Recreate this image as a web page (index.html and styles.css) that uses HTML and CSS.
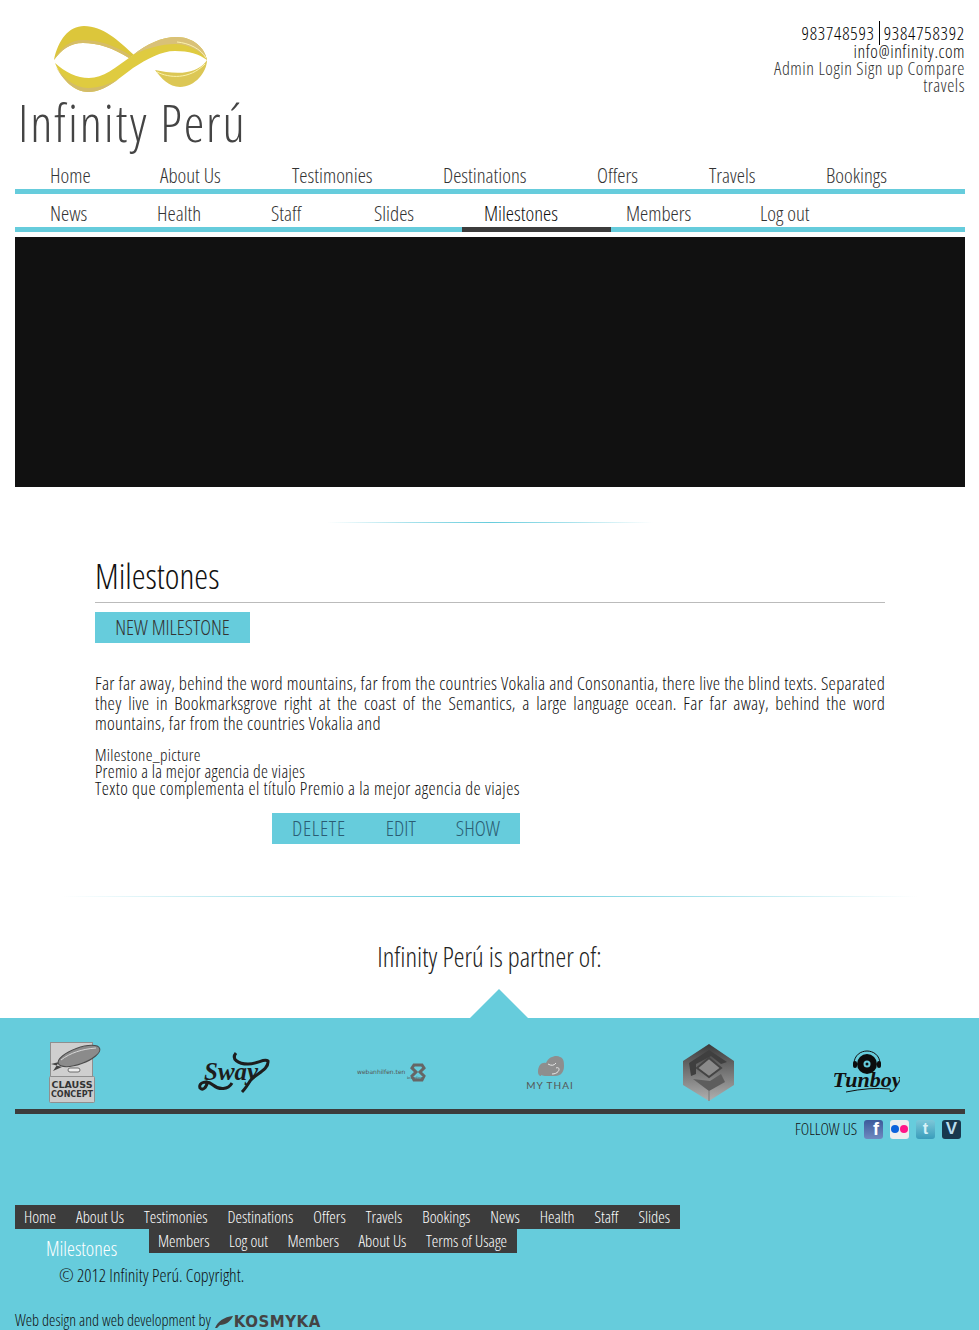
FILE: index.html
```html
<!DOCTYPE html>
<html>
<head>
<meta charset="utf-8">
<title>Infinity Perú</title>
<link rel="stylesheet" href="styles.css">
</head>
<body>
<div id="header">
  <div class="logo">
    <svg class="logo-mark" width="156" height="68" viewBox="0 0 156 68">
      <path d="M1 34C5 14 16 0 31 0C50 0 65 14 81 29L76 32C60 22 45 17 30 17C17 17 8 24 1 34Z" fill="#dcc63b"/>
      <path d="M1 34C8 24 17 17 30 17C45 17 60 22 76 32L78 30C60 18 44 14 30 14C17 14 7 22 1 34Z" fill="#d6bd68"/>
      <path d="M2 37C12 46 24 52 36 52C50 52 62 42 80 29C94 18 108 11 124 11C140 11 152 22 154 34C146 28 136 25 122 25C108 25 94 33 80 42C66 52 52 66 35 66C20 66 8 52 2 37Z" fill="#dfcb40"/>
      <path d="M80 29C94 18 108 11 124 11C140 11 152 22 154 34C146 23 134 18 122 18C108 18 94 22 80 29Z" fill="#d9c178"/>
      <path d="M3 41C10 54 22 66 35 66C46 66 56 60 66 53C56 58 46 62 35 62C22 62 10 52 3 41Z" fill="#d3bc6a"/>
      <path d="M102 44C112 46 124 48 134 46C144 44 150 40 154 34C154 46 142 61 127 61C116 61 108 52 102 44Z" fill="#dcc755"/>
      <path d="M104 46C116 52 136 54 152 38" fill="none" stroke="#fbf2ac" stroke-width="1"/>
      <path d="M124 16C136 17 148 23 153 32" fill="none" stroke="#fbf2ac" stroke-width="1"/>
    </svg>
    <div class="logo-text">Infinity Perú</div>
  </div>
  <div class="contact">
    <div class="phones"><span class="phone-a">983748593</span><span>9384758392</span></div>
    <div class="mail">info@infinity.com</div>
    <div class="contact-links">Admin Login Sign up Compare travels</div>
  </div>
</div>

<ul class="mainnav first">
  <li class="w1">Home</li>
  <li class="w2">About Us</li>
  <li class="w3">Testimonies</li>
  <li class="w4">Destinations</li>
  <li class="w5">Offers</li>
  <li class="w6">Travels</li>
  <li>Bookings</li>
</ul>
<ul class="mainnav second">
  <li class="s1">News</li>
  <li class="s2">Health</li>
  <li class="s3">Staff</li>
  <li class="s4">Slides</li>
  <li class="s5 current">Milestones</li>
  <li class="s6">Members</li>
  <li>Log out</li>
</ul>

<div id="slider"></div>

<div class="fade-line short"></div>

<div id="content">
  <h1>Milestones</h1>
  <a class="btn new-btn">NEW MILESTONE</a>
  <p class="intro">Far far away, behind the word mountains, far from the countries Vokalia and Consonantia, there live the blind texts. Separated they live in Bookmarksgrove right at the coast of the Semantics, a large language ocean. Far far away, behind the word mountains, far from the countries Vokalia and</p>
  <div class="record">
    <div class="rec-name">Milestone_picture</div>
    <div class="rec-title">Premio a la mejor agencia de viajes</div>
    <div class="rec-text">Texto que complementa el título Premio a la mejor agencia de viajes</div>
  </div>
  <div class="actions">
    <a class="btn">DELETE</a><a class="btn">EDIT</a><a class="btn">SHOW</a>
  </div>
</div>

<div class="fade-line wide"></div>

<h2 class="partner-title">Infinity Perú is partner of:</h2>
<div class="arrow"></div>

<div id="footer">
  <div class="partners">
    <svg width="54" height="63" viewBox="0 0 54 63">
      <rect x="2.5" y="1.5" width="42" height="36" fill="#cfcfcf" stroke="#8f8f8f"/>
      <path d="M3 23L11 21L5 30L14 26Z" fill="#444"/>
      <ellipse cx="31" cy="15" rx="22" ry="8" transform="rotate(-20 31 15)" fill="#8b8b8b" stroke="#4c4c4c"/>
      <path d="M13 19C22 12 34 8 48 7" fill="none" stroke="#d8d8d8"/>
      <rect x="20" y="27" width="12" height="4" rx="2" fill="#eee" stroke="#6c6c6c"/>
      <rect x="1.5" y="35.5" width="45" height="26" rx="1" fill="#cbcbcb" stroke="#8f8f8f"/>
      <text x="24" y="47" class="clauss">CLAUSS</text>
      <text x="24" y="56" class="clauss small">CONCEPT</text>
    </svg>
    <svg width="72" height="43" viewBox="0 0 72 43">
      <text x="6" y="29" class="sway">Sway</text>
      <path d="M38 2C33 8 40 13 50 13C60 13 66 7 70 10C71 19 57 23 52 30C49 35 47 38 44 41" fill="none" stroke="#1d1d1d" stroke-width="3"/>
      <path d="M10 30C8 37 5 40 2 37C0 31 9 29 15 34C21 39 30 39 34 32" fill="none" stroke="#1d1d1d" stroke-width="3"/>
    </svg>
    <svg width="70" height="20" viewBox="0 0 70 20">
      <text x="0" y="11" class="web-t">webanhilfen.ten</text>
      <text x="50" y="16" class="web-t tiny">branding</text>
      <path d="M57 2L65 2L67 5L63 9L67 13L65 17L57 17L55 13L59 9L55 5Z" fill="none" stroke="#666" stroke-width="3"/>
    </svg>
    <svg width="50" height="36" viewBox="0 0 50 36">
      <path d="M13 17C13 10 17 7 21 8C24 1 32 0 35 2C39 3 39 8 39 11C39 17 36 21 30 21H20C17 21 16 19 16 21C14 21 13 19 13 17Z" fill="#8e8e8e"/>
      <path d="M23 9Q28 12 31 8M27 19C35 19 36 11 31 13" fill="none" stroke="#e8e8e8" stroke-width="1"/>
      <text x="25" y="34" class="mythai">MY THAI</text>
    </svg>
    <svg width="52" height="57" viewBox="0 0 52 57">
      <defs>
        <linearGradient id="cube" x1="0" y1="0" x2="0" y2="1">
          <stop offset="0" stop-color="#3a3a3a"/>
          <stop offset="1" stop-color="#b0b0b0"/>
        </linearGradient>
      </defs>
      <path d="M26 0L51 17V41L26 57L0 41V17Z" fill="url(#cube)"/>
      <path d="M26 6L44 18L38 20L28 12L13 20L13 30L8 32L6 19Z" fill="#3f3f3f"/>
      <path d="M26 14L38 24L26 33L14 24Z" fill="#8a8a8a" stroke="#444" stroke-width="2"/>
      <path d="M10 35L27 37L38 30L42 38L26 47Z" fill="#5d5d5d"/>
      <path d="M26 47V57" stroke="#777"/>
    </svg>
    <svg width="66" height="46" viewBox="0 0 66 46">
      <path d="M20 14C20 5 27 1 33 1S46 5 46 14" fill="none" stroke="#111"/>
      <circle cx="33" cy="14" r="10" fill="#0c0c0c"/>
      <circle cx="33" cy="14" r="3.5" fill="#66ccdc"/>
      <circle cx="33" cy="14" r="1.5" fill="#0c0c0c"/>
      <rect x="19" y="11" width="4" height="7" rx="2" fill="#0c0c0c"/>
      <rect x="43" y="11" width="4" height="7" rx="2" fill="#0c0c0c"/>
      <text x="33" y="37" class="tunboy">Tunboy</text>
      <path d="M12 42Q36 37 56 39" fill="none" stroke="#111"/>
    </svg>
  </div>
  <div class="dark-bar"></div>
  <div class="follow">
    <span class="follow-label">FOLLOW US</span>
    <span class="social fb">f</span>
    <span class="social flickr"><i class="dot blue"></i><i class="dot pink"></i></span>
    <span class="social tw">t</span>
    <span class="social vimeo">V</span>
  </div>
  <div class="foot-links">
    <ul class="footnav row-a">
      <li>Home</li><li>About Us</li><li>Testimonies</li><li>Destinations</li><li>Offers</li><li>Travels</li><li>Bookings</li><li>News</li><li>Health</li><li>Staff</li><li>Slides</li>
    </ul>
    <div class="row-b">
      <span class="foot-current">Milestones</span>
      <ul class="footnav">
        <li>Members</li><li>Log out</li><li>Members</li><li>About Us</li><li>Terms of Usage</li>
      </ul>
    </div>
  </div>
  <div class="copyright">© 2012 Infinity Perú. Copyright.</div>
  <div class="credit">
    <span>Web design and web development by</span>
    <svg class="feather" width="18" height="12" viewBox="0 0 18 12"><path d="M0 12C3 5 9 1 18 0C16 5 11 9 5 9L2 12Z" fill="#444"/></svg>
    <span class="kosmyka">KOSMYKA</span>
  </div>
</div>
</body>
</html>
```

FILE: styles.css
```css
html, body
{
margin: 0;
padding: 0;
}

body
{
background: #fff;
color: #222;
font-family: "Open Sans", sans-serif;
font-stretch: 75%;
font-weight: 350;
font-size: 18px;
width: 979px;
overflow-x: hidden;
}

#header
{
display: flex;
justify-content: space-between;
height: 160px;
margin: 0 14px 0 15px;
}

.logo
{
padding-top: 26px;
}

.logo-mark
{
display: block;
margin-left: 38px;
}

.logo-text
{
font-size: 52px;
font-weight: 300;
letter-spacing: 1.9px;
line-height: 56px;
color: #444;
margin-left: 3px;
white-space: nowrap;
}

.contact
{
width: 200px;
padding-top: 23px;
text-align: right;
font-size: 18px;
letter-spacing: 0.55px;
line-height: 17px;
}

.phones
{
letter-spacing: 0.8px;
line-height: 21px;
color: #000;
}

.phone-a
{
border-right: 1px solid #000;
padding-right: 4px;
margin-right: 4px;
}

.mail
{
margin-top: -1px;
color: #111;
}

.contact-links
{
color: #333;
}

.mainnav
{
list-style: none;
display: flex;
margin: 0 14px 0 15px;
padding: 2px 0 1px 35px;
border-bottom: 5px solid #66ccdc;
font-size: 20.8px;
line-height: 26px;
color: #333;
}

.mainnav.second
{
padding-top: 6px;
}

.w1 { width: 110px; }
.w2 { width: 132px; }
.w3 { width: 151px; }
.w4 { width: 154px; }
.w5 { width: 112px; }
.w6 { width: 117px; }

.s1 { width: 107px; }
.s2 { width: 114px; }
.s3 { width: 103px; }
.s4 { width: 110px; }
.s5 { width: 142px; }
.s6 { width: 134px; }

.mainnav .current
{
color: #111;
position: relative;
}

.mainnav .current:after
{
content: "";
position: absolute;
left: -22px;
bottom: -6px;
width: 149px;
height: 5px;
background: #3c3c3c;
}

#slider
{
background: #111;
height: 250px;
margin: 5px 14px 0 15px;
}

.fade-line
{
height: 1px;
margin-left: auto;
margin-right: auto;
background: linear-gradient(to right, #fff, #a8e2ec 25%, #66ccdc 50%, #a8e2ec 75%, #fff);
}

.fade-line.short
{
width: 326px;
margin-top: 35px;
}

.fade-line.wide
{
width: 856px;
margin-top: 52px;
}

#content
{
margin: 0 94px 0 95px;
}

h1
{
font-weight: 300;
font-size: 35px;
line-height: 40px;
color: #111;
margin: 33px 0 0;
padding-bottom: 6px;
border-bottom: 1px solid #bbb;
}

.btn
{
color: #2b5d73;
font-size: 21px;
line-height: 31px;
white-space: nowrap;
}

.new-btn
{
display: block;
background: #66ccdc;
width: 155px;
text-align: center;
margin-top: 9px;
font-size: 20.5px;
color: #333;
}

.intro
{
margin: 30px 0 0;
font-size: 18.5px;
letter-spacing: 0.25px;
line-height: 20px;
text-align: justify;
color: #111;
}

.record
{
margin-top: 13px;
line-height: 17px;
color: #111;
}

.rec-name { font-size: 17px; letter-spacing: 0.3px; }
.rec-title { font-size: 17.5px; letter-spacing: 0.3px; }
.rec-text { font-size: 18px; letter-spacing: 0.42px; }

.actions
{
display: flex;
gap: 40px;
width: 248px;
margin: 16px 0 0 177px;
background: #66ccdc;
padding-left: 20px;
box-sizing: border-box;
}

.actions .btn:first-child
{
letter-spacing: 0.7px;
}

.partner-title
{
font-weight: 300;
font-size: 27.2px;
line-height: 32px;
text-align: center;
color: #222;
margin: 44px 0 0;
}

.arrow
{
width: 0;
height: 0;
margin: 16px 0 0 470px;
border-left: 29px solid transparent;
border-right: 29px solid transparent;
border-bottom: 29px solid #66ccdc;
}

#footer
{
background: #66ccdc;
height: 312px;
padding: 0 14px 0 15px;
overflow: hidden;
}

.partners
{
display: grid;
grid-template-columns: repeat(6, 158.4px);
justify-items: center;
align-items: center;
height: 73px;
padding-top: 18px;
margin-left: -19px;
}

.clauss
{
font-family: "DejaVu Sans", sans-serif;
font-stretch: normal;
font-weight: bold;
font-size: 9.5px;
text-anchor: middle;
fill: #333;
}

.clauss.small { font-size: 8px; }

.sway
{
font-family: "Liberation Serif", serif;
font-stretch: normal;
font-style: italic;
font-weight: bold;
font-size: 25px;
fill: #1d1d1d;
}

.web-t
{
font-family: "DejaVu Sans", sans-serif;
font-stretch: normal;
font-weight: normal;
font-size: 6px;
fill: #555;
}

.web-t.tiny
{
font-size: 3.5px;
}

.mythai
{
font-family: "Lato", sans-serif;
font-stretch: normal;
font-weight: normal;
font-size: 10px;
letter-spacing: 1px;
text-anchor: middle;
fill: #555;
}

.tunboy
{
font-family: "Liberation Serif", serif;
font-stretch: normal;
font-style: italic;
font-weight: bold;
font-size: 22px;
text-anchor: middle;
fill: #111;
}

.dark-bar
{
height: 5px;
background: #3c3c3c;
}

.follow
{
display: flex;
justify-content: flex-end;
align-items: center;
gap: 7px;
height: 30px;
padding-right: 4px;
}

.follow-label
{
font-size: 16px;
color: #111;
}

.social
{
display: flex;
align-items: center;
justify-content: center;
width: 19px;
height: 19px;
border-radius: 3px;
font-family: "Liberation Sans", sans-serif;
font-stretch: normal;
font-weight: bold;
color: #fff;
font-size: 16px;
}

.fb
{
background: linear-gradient(#3c5a9a, #6f8ac0);
justify-content: flex-end;
padding-right: 4px;
box-sizing: border-box;
font-size: 18px;
}

.flickr
{
background: #eee;
gap: 1px;
}

.tw
{
background: linear-gradient(#7cc7d8, #3a9dbb);
color: #d8f2f8;
}

.vimeo
{
background: #18384e;
color: #bde;
font-size: 17px;
}

.dot
{
width: 8px;
height: 8px;
border-radius: 50%;
}

.dot.blue { background: #0b63dc; }
.dot.pink { background: #ff1688; }

.foot-links
{
margin-top: 61px;
font-size: 16.4px;
line-height: 24px;
color: #fff;
}

.footnav
{
list-style: none;
display: inline-flex;
gap: 19.5px;
margin: 0;
padding: 0 10px 0 9px;
background: #3c3c3c;
white-space: nowrap;
}

.foot-links .row-a
{
display: flex;
gap: 20px;
width: max-content;
}

.row-b
{
display: flex;
align-items: flex-start;
height: 32px;
}

.foot-current
{
width: 134px;
font-size: 20px;
padding: 8px 0 0 31px;
box-sizing: border-box;
}

.copyright
{
margin: 2px 0 0 44px;
font-size: 17.8px;
line-height: 24px;
color: #111;
}

.credit
{
display: flex;
align-items: center;
gap: 4px;
margin-top: 23px;
font-size: 16px;
line-height: 20px;
color: #111;
}

.feather
{
margin-top: 3px;
}

.kosmyka
{
font-family: "DejaVu Sans", sans-serif;
font-stretch: normal;
font-weight: bold;
font-size: 15px;
line-height: 14px;
margin: 4px 0 0 -3px;
color: #444;
letter-spacing: 0.5px;
}
```
